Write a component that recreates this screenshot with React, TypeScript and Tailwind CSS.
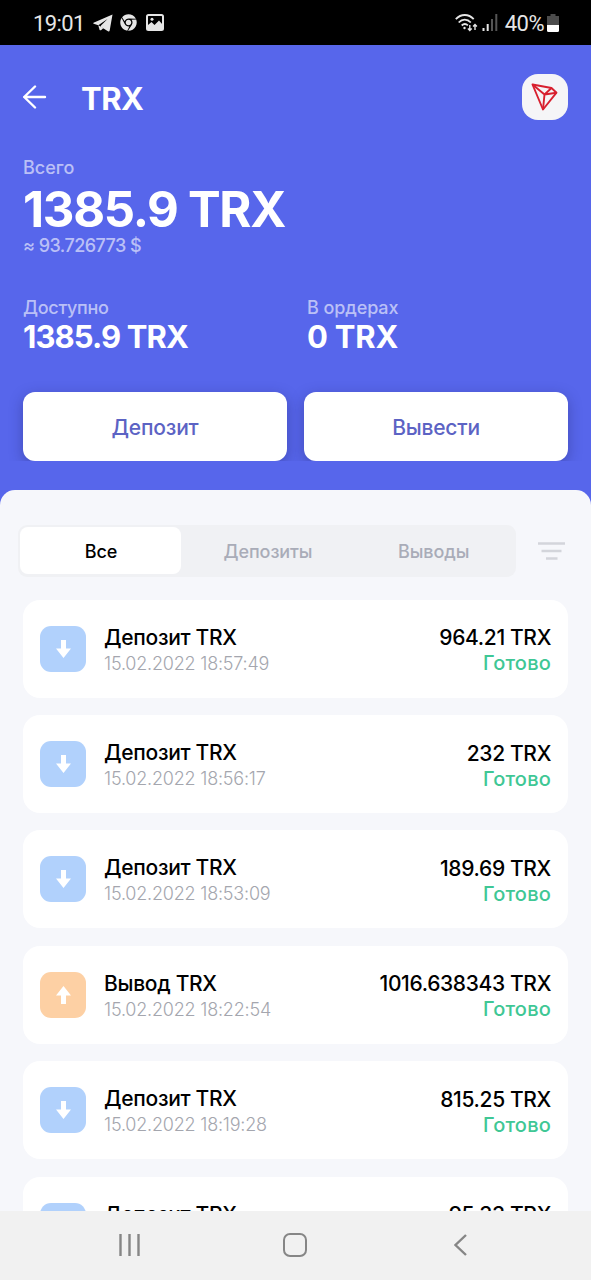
import { clsx } from 'clsx'
import { FaChrome } from 'react-icons/fa'

type Tx = {
  kind: 'in' | 'out'
  title: string
  date: string
  amount: string
}

const txs: Tx[] = [
  { kind: 'in', title: 'Депозит TRX', date: '15.02.2022 18:57:49', amount: '964.21 TRX' },
  { kind: 'in', title: 'Депозит TRX', date: '15.02.2022 18:56:17', amount: '232 TRX' },
  { kind: 'in', title: 'Депозит TRX', date: '15.02.2022 18:53:09', amount: '189.69 TRX' },
  { kind: 'out', title: 'Вывод TRX', date: '15.02.2022 18:22:54', amount: '1016.638343 TRX' },
  { kind: 'in', title: 'Депозит TRX', date: '15.02.2022 18:19:28', amount: '815.25 TRX' },
  { kind: 'in', title: 'Депозит TRX', date: '15.02.2022 18:11:52', amount: '95.33 TRX' },
]

function StatusBar() {
  return (
    <div className="flex h-[45px] shrink-0 items-center bg-black pl-[33px] pr-[32px] font-['Roboto'] text-[22px] text-[#e6e6e6]">
      <span className="mt-[2px] w-[60px] tracking-[-0.6px]">19:01</span>
      <svg className="mt-[1px] h-[18px] w-[20px]" viewBox="0 0 20 18" fill="currentColor">
        <path d="M19.500.5L.5 8.800q-.6.500.2.900l4.600 1.500L14.500 5 8 11.500l-.3 1.200 7.300 4.600q1.300.6 1.700-.8z" />
        <path d="M5.300 11.200l1.200 4.600q.8 1 1.800.1l2.200-2z" />
      </svg>
      <FaChrome className="ml-[7px] size-[17px]" />
      <svg className="ml-[9px] h-[17px] w-[18px]" viewBox="0 0 18 17">
        <rect x="1" y="1" width="16" height="15" rx="1.5" fill="none" stroke="currentColor" strokeWidth="2" />
        <path d="M2 11l3.500-3 3 3L13 6.500l3.500 4V15.500H2z" fill="currentColor" />
        <circle cx="6" cy="5.200" r="1.500" fill="currentColor" />
      </svg>
      <svg className="ml-auto h-[18px] w-[23px]" viewBox="0 0 23 18" fill="none" stroke="currentColor" strokeWidth="1.800">
        <path d="M.8 5.200C6-.4 13.500-.4 18.700 5.200M3.700 8.500c3.500-3.900 8.600-3.900 12.100 0M6.700 11.500c1.900-1.900 4.300-1.900 6.200-.2" />
        <circle cx="9.500" cy="14" r="1.200" fill="currentColor" stroke="none" />
        <path d="M14.800 11v5.500m-1.900-2 1.900 2 1.900-2M20 16v-5.500m-1.900 2 1.900-2 1.900 2" strokeWidth="1.400" />
      </svg>
      <svg className="ml-[4px] h-[17px] w-[16px]" viewBox="0 0 16 17">
        <path d="M.5 14h2v3h-2zM4.700 10h2v7h-2z" fill="#e6e6e6" />
        <path d="M9 5h2v12H9zM13.300 0h2v17h-2z" fill="#555" />
      </svg>
      <span className="ml-[7px] mt-[2px] tracking-[-0.5px]">40%</span>
      <svg className="ml-[3px] h-[18px] w-[12px]" viewBox="0 0 12 18">
        <path d="M3.500 0h5v2H12v9H0V2h3.500z" fill="#4c4c4c" />
        <path d="M0 11h12v5.500q0 1.500-1.500 1.500h-9Q0 18 0 16.500z" fill="#fff" />
      </svg>
    </div>
  )
}

function Header() {
  return (
    <header className="h-[445px] shrink-0 px-[23px] pt-[29px] text-white">
      <div className="flex h-[46px] items-center">
        <svg className="h-[24px] w-[24px]" viewBox="0 0 24 24" fill="none" stroke="currentColor" strokeWidth="2.400" strokeLinecap="round" strokeLinejoin="round">
          <path d="M22 12H1.200M12 1.500L1.200 12 12 22.500" />
        </svg>
        <h1 className="ml-[34px] mt-[4px] text-[31px] font-bold tracking-[-0.5px]">TRX</h1>
        <div className="ml-auto flex size-[46px] items-center justify-center rounded-[16px] bg-[#f5f5f7] pr-[2px]">
          <svg className="h-[28px] w-[27px]" viewBox="0 0 27 28" fill="none" stroke="#d8202f" strokeWidth="1.900" strokeLinejoin="round">
            <path d="M1.500 1.500L20.500 5l5 4.700L12 26.500z" />
            <path d="M1.500 1.500L13.500 11.500 25.500 9.700M20.500 5l-7 6.500L12 26.500" />
          </svg>
        </div>
      </div>

      <div className="mt-[36px]">
        <div className="text-[18px] leading-[24px] font-medium text-white/60">Всего</div>
        <div className="pt-[1px] text-[49px] leading-[57px] font-bold tracking-[-1.300px]">1385.9 TRX</div>
        <div className="-mt-[1px] text-[18px] leading-[18px] font-medium tracking-[-0.550px] text-white/60">≈ 93.726773 $</div>
      </div>

      <div className="mt-[40px] grid grid-cols-[284px_1fr]">
        <div>
          <div className="text-[18px] leading-[26px] font-medium tracking-[-0.3px] text-white/60">Доступно</div>
          <div className="text-[31px] leading-[32px] font-bold tracking-[-0.900px]">1385.9 TRX</div>
        </div>
        <div>
          <div className="text-[18px] leading-[26px] font-medium tracking-[-0.1px] text-white/60">В ордерах</div>
          <div className="text-[31px] leading-[32px] font-bold tracking-[-0.200px]">0 TRX</div>
        </div>
      </div>

      <div className="-mx-[23px] mt-[23px] grid h-[85px] grid-cols-2 gap-[17px] overflow-hidden px-[23px] pt-[16px] text-[21px] font-medium tracking-[-0.200px] text-[#5c63c4]">
        <button className="h-[69px] rounded-[12px] bg-white pt-[3px] shadow-[0_4px_14px_rgba(30,30,90,0.35)]">Депозит</button>
        <button className="h-[69px] rounded-[12px] bg-white pt-[3px] shadow-[0_4px_14px_rgba(30,30,90,0.35)]">Вывести</button>
      </div>
    </header>
  )
}

function Tabs() {
  return (
    <div className="flex items-center pl-[18px] pr-[26px]">
      <div className="grid h-[52px] w-[498px] grid-cols-3 rounded-[9px] bg-[#f0f1f4] p-[2px] text-[18px] font-medium tracking-[-0.100px] text-[#a9acb8]">
        <button className="h-[47px] w-[161px] rounded-[8px] bg-white pt-[2px] pl-[1px] text-black">Все</button>
        <button className="pl-[2px]">Депозиты</button>
        <button className="pl-[4px]">Выводы</button>
      </div>
      <svg className="ml-auto h-[18px] w-[27px]" viewBox="0 0 27 18" stroke="#d3d5db" strokeWidth="2.500">
        <path d="M0 1.500h27M3.500 9h20M8 16.500h11.500" />
      </svg>
    </div>
  )
}

function TxCard({ tx }: { tx: Tx }) {
  return (
    <div className="flex h-[98px] shrink-0 items-center rounded-[17px] bg-white px-[17px]">
      <div className={clsx('flex size-[46px] items-center justify-center rounded-[11px]', tx.kind === 'in' ? 'bg-[#b1d1fc]' : 'bg-[#fdd0a4]')}>
        <svg className={clsx('h-[18px] w-[15px]', tx.kind === 'out' && 'rotate-180')} viewBox="0 0 15 18" fill="#fff">
          <path d="M5 0h5v8.500h5L7.500 18 0 8.500h5z" />
        </svg>
      </div>
      <div className="ml-[18px] pt-[4px]">
        <div className="text-[21px] leading-[26px] font-medium tracking-[-0.3px] text-black">{tx.title}</div>
        <div className="text-[18px] leading-[26px] font-light tracking-[-0.200px] text-[#a4a6ae]">{tx.date}</div>
      </div>
      <div className="ml-auto pt-[4px] text-right">
        <div className="text-[21px] leading-[26px] font-medium tracking-[-0.350px] text-black">{tx.amount}</div>
        <div className="text-[20px] leading-[25px] font-medium tracking-[0.200px] text-[#3fc795]">Готово</div>
      </div>
    </div>
  )
}

function NavBar() {
  return (
    <div className="flex h-[69px] shrink-0 items-center bg-[#f1f1f1] pb-[2px] text-[#868686]">
      <svg className="ml-[119px] h-[22px] w-[21px]" viewBox="0 0 21 22" stroke="currentColor" strokeWidth="2.400">
        <path d="M1.500 0v22M10.500 0v22M19.500 0v22" />
      </svg>
      <div className="ml-[143px] size-[24px] rounded-[7px] border-[2.500px] border-current" />
      <svg className="ml-[147px] h-[22px] w-[13px]" viewBox="0 0 13 22" fill="none" stroke="currentColor" strokeWidth="2.400">
        <path d="M12 1L1.500 11 12 21" />
      </svg>
    </div>
  )
}

export default function App() {
  return (
    <div className="flex h-[1280px] w-[591px] flex-col overflow-hidden bg-[#5766eb] font-['Inter',sans-serif]">
      <StatusBar />
      <Header />
      <main className="min-h-0 flex-1 overflow-hidden rounded-t-[15px] bg-[#f6f7fb] pt-[35px]">
        <Tabs />
        <div className="mt-[22.700px] flex flex-col gap-[17.400px] px-[23px]">
          {txs.map((tx) => (
            <TxCard key={tx.date} tx={tx} />
          ))}
        </div>
      </main>
      <NavBar />
    </div>
  )
}
